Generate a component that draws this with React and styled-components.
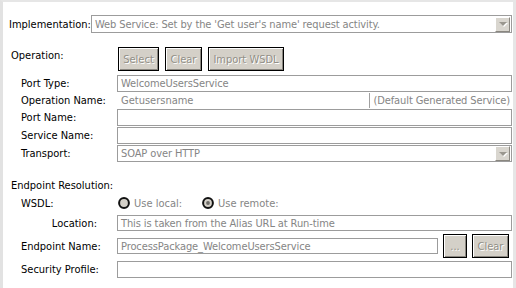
import React from "react";
import styled, { createGlobalStyle } from "styled-components";

const GlobalStyle = createGlobalStyle`
  html, body {
    margin: 0;
    padding: 0;
    background: #fff;
  }
  body {
    font-family: "DejaVu Sans Condensed", Tahoma, "DejaVu Sans", sans-serif;
    font-size: 11px;
    color: #000;
  }
`;

const Frame = styled.div`
  width: 516px;
  height: 288px;
  box-sizing: border-box;
  border-top: 2px solid #e6e6e6;
  border-left: 3px solid #e2e2e2;
  border-right: 3px solid #e6e6e6;
  background: #fff;
  padding: 13px 1px 0 6px;
`;

const Row = styled.div`
  display: flex;
  align-items: ${(p) => p.$align || "center"};
  height: ${(p) => p.$h || 17}px;
  margin-top: ${(p) => p.$mt || 0}px;
  padding-left: ${(p) => p.$indent || 0}px;
  padding-right: ${(p) => p.$pr || 0}px;
`;

const Label = styled.div`
  flex: none;
  width: ${(p) => p.$w}px;
  text-align: ${(p) => (p.$right ? "right" : "left")};
  padding-right: ${(p) => (p.$right ? 20 : 0)}px;
  box-sizing: border-box;
  white-space: nowrap;
  padding-top: ${(p) => p.$pt || 0}px;
`;

const Input = styled.div`
  flex: 1;
  height: ${(p) => p.$h || 17}px;
  box-sizing: border-box;
  border: 1px solid #9c9c9c;
  background: #fff;
  color: #858585;
  padding-left: 3px;
  display: flex;
  align-items: center;
  white-space: nowrap;
  overflow: hidden;
  letter-spacing: -0.1px;
`;

const Select = styled(Input)`
  padding-right: 1px;
  justify-content: space-between;
`;

const ArrowBox = styled.div`
  width: 15px;
  height: 15px;
  box-sizing: border-box;
  background: #d9d6cf;
  border: 1px solid;
  border-color: #fff #8a8780 #8a8780 #fff;
  display: flex;
  align-items: center;
  justify-content: center;
`;

const Arrow = styled.div`
  width: 0;
  height: 0;
  border-left: 4px solid transparent;
  border-right: 4px solid transparent;
  border-top: 4px solid #9a978f;
  filter: drop-shadow(1px 1px 0 #fff);
`;

const Buttons = styled.div`
  display: flex;
  gap: 6px;
`;

const Button = styled.div`
  width: ${(p) => p.$w}px;
  height: 24px;
  box-sizing: border-box;
  border: 1px solid #000;
  background: #d4d0c8;
  box-shadow: inset 1px 1px 0 #fff, inset -1px -1px 0 #8a8780;
  color: #928f87;
  text-shadow: 1px 1px 0 #fff;
  display: flex;
  align-items: center;
  justify-content: center;
  flex: none;
  margin-left: ${(p) => p.$ml || 0}px;
`;

const Plain = styled.div`
  color: #858585;
  padding-left: 4px;
  flex: 1;
  white-space: nowrap;
`;

const Note = styled.div`
  color: #858585;
  border-left: 1px solid #a0a0a0;
  padding-left: 3px;
  height: 15px;
  line-height: 15px;
  margin-right: 2px;
  white-space: nowrap;
  letter-spacing: -0.1px;
`;

const Heading = styled.div`
  padding-left: 2px;
  margin-top: ${(p) => p.$mt || 0}px;
  height: 16px;
  line-height: 16px;
`;

const RadioGroup = styled.label`
  display: flex;
  align-items: center;
  gap: 4px;
  color: #858585;
  margin-right: ${(p) => p.$mr || 0}px;
`;

const Radio = ({ on }) => (
  <svg width="12" height="12" viewBox="0 0 12 12">
    <circle cx="6" cy="6" r="4.9" fill="#d4d0c8" stroke="#111" strokeWidth="2" />
    {on && <circle cx="6" cy="6" r="1.9" fill="#6e6c68" />}
  </svg>
);

export default function App() {
  return (
    <>
      <GlobalStyle />
      <Frame>
        <Row $h={18}>
          <Label $w={82}>Implementation:</Label>
          <Select $h={18}>
            <span>Web Service: Set by the 'Get user's name' request activity.</span>
            <ArrowBox>
              <Arrow />
            </ArrowBox>
          </Select>
        </Row>

        <Row $h={24} $mt={14} $indent={2} $align="flex-start">
          <Label $w={107} $pt={2}>Operation:</Label>
          <Buttons>
            <Button $w={41}>Select</Button>
            <Button $w={37}>Clear</Button>
            <Button $w={76}>Import WSDL</Button>
          </Buttons>
        </Row>

        <Row $mt={4} $indent={12}>
          <Label $w={96}>Port Type:</Label>
          <Input>WelcomeUsersService</Input>
        </Row>
        <Row $h={16} $indent={12}>
          <Label $w={96}>Operation Name:</Label>
          <Plain>Getusersname</Plain>
          <Note>(Default Generated Service)</Note>
        </Row>
        <Row $mt={1} $indent={12}>
          <Label $w={96}>Port Name:</Label>
          <Input />
        </Row>
        <Row $mt={1} $indent={12}>
          <Label $w={96}>Service Name:</Label>
          <Input />
        </Row>
        <Row $mt={1} $indent={12}>
          <Label $w={96}>Transport:</Label>
          <Select>
            <span>SOAP over HTTP</span>
            <ArrowBox>
              <Arrow />
            </ArrowBox>
          </Select>
        </Row>

        <Heading $mt={16}>Endpoint Resolution:</Heading>
        <Row $h={18} $indent={12}>
          <Label $w={97}>WSDL:</Label>
          <RadioGroup $mr={20}>
            <Radio />
            Use local:
          </RadioGroup>
          <RadioGroup>
            <Radio on />
            Use remote:
          </RadioGroup>
        </Row>
        <Row $mt={3} $h={16} $indent={12}>
          <Label $w={96} $right>Location:</Label>
          <Input $h={16}>This is taken from the Alias URL at Run-time</Input>
        </Row>
        <Row $mt={3} $h={24} $indent={12} $pr={3}>
          <Label $w={96}>Endpoint Name:</Label>
          <Input $h={16}>ProcessPackage_WelcomeUsersService</Input>
          <Button $w={24} $ml={5}>...</Button>
          <Button $w={37} $ml={5}>Clear</Button>
        </Row>
        <Row $mt={3} $h={17} $indent={12}>
          <Label $w={96}>Security Profile:</Label>
          <Input />
        </Row>
      </Frame>
    </>
  );
}
